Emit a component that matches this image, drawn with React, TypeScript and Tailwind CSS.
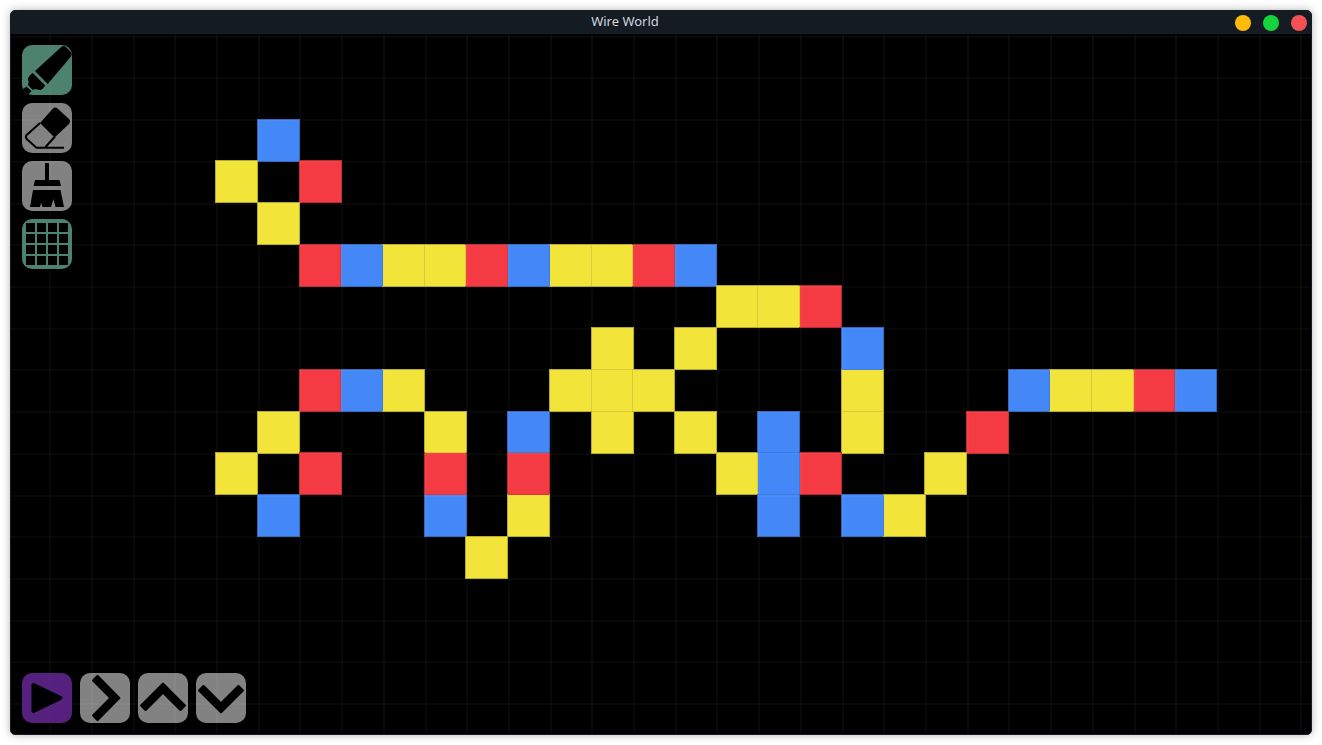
import React from "react";

type Kind = "Y" | "R" | "B";

const PITCH = 41.71;
const COLUMNS = 32;
const ROWS = 17;

const FILL: Record<Kind, string> = {
  Y: "fill-[#f2e439]",
  R: "fill-[#f43a42]",
  B: "fill-[#4488f8]",
};

const EDGE: Record<Kind, string> = {
  Y: "fill-[#b5ab2b]",
  R: "fill-[#b72c32]",
  B: "fill-[#3366ba]",
};

/* Each entry is a run of cells: column, row, kinds from left to right. */
const RUNS: [number, number, string][] = [
  [6, 2, "B"],
  [5, 3, "Y"],
  [7, 3, "R"],
  [6, 4, "Y"],
  [7, 5, "RBYYRBYYRB"],
  [17, 6, "YYR"],
  [14, 7, "Y"],
  [16, 7, "Y"],
  [20, 7, "B"],
  [7, 8, "RBY"],
  [13, 8, "YYY"],
  [20, 8, "Y"],
  [24, 8, "BYYRB"],
  [6, 9, "Y"],
  [10, 9, "Y"],
  [12, 9, "B"],
  [14, 9, "Y"],
  [16, 9, "Y"],
  [18, 9, "B"],
  [20, 9, "Y"],
  [23, 9, "R"],
  [5, 10, "Y"],
  [7, 10, "R"],
  [10, 10, "R"],
  [12, 10, "R"],
  [17, 10, "YBR"],
  [22, 10, "Y"],
  [6, 11, "B"],
  [10, 11, "B"],
  [12, 11, "Y"],
  [18, 11, "B"],
  [20, 11, "BY"],
  [11, 12, "Y"],
];

const cells = RUNS.flatMap(([column, row, kinds]) =>
  [...kinds].map((kind, i) => ({ column: column + i, row, kind: kind as Kind })),
);

const occupied = new Set(cells.map(({ column, row }) => `${column},${row}`));

const left = (column: number) => Math.round(column * PITCH - 4.4);
const top = (row: number) => Math.round(row * PITCH + 1.2);
const lineX = (column: number) => Math.round(column * PITCH - 3.6);
const lineY = (row: number) => Math.round(row * PITCH + 1.7);

function Board() {
  return (
    <svg className="absolute inset-0 h-full w-full" role="img" aria-label="Wire World board" shapeRendering="crispEdges">
      {cells.map(({ column, row, kind }) => (
        <rect key={`e${column}-${row}`} x={left(column)} y={top(row)} width="43" height="43" className={EDGE[kind]} />
      ))}
      {cells.map(({ column, row, kind }) => {
        const x = left(column);
        const y = top(row);
        const joinsRight = occupied.has(`${column + 1},${row}`);
        const joinsDown = occupied.has(`${column},${row + 1}`);
        const width = joinsRight ? left(column + 1) - x : 41;
        const height = joinsDown ? top(row + 1) - y : 41;
        return (
          <g key={`f${column}-${row}`}>
            <rect x={x + 1} y={y + 1} width={width} height={height} className={FILL[kind]} />
            {joinsRight && <rect x={x + width} y={y + 1} width="1" height={height} className="fill-black/10" />}
            {joinsDown && <rect x={x + 1} y={y + height} width={width} height="1" className="fill-black/10" />}
          </g>
        );
      })}
      {Array.from({ length: COLUMNS }, (_, i) => (
        <rect key={`c${i}`} x={lineX(i)} y="0" width="2" height="100%" className="fill-white/3" />
      ))}
      {Array.from({ length: ROWS }, (_, i) => (
        <rect key={`r${i}`} x="0" y={lineY(i)} width="100%" height="2" className="fill-white/3" />
      ))}
    </svg>
  );
}

function Tool({ label, tone, children }: { label: string; tone: string; children: React.ReactNode }) {
  return (
    <button type="button" aria-label={label} className={`size-[50px] overflow-hidden rounded-[10px] ${tone}`}>
      <svg viewBox="0 0 50 50" className="size-full" aria-hidden="true">
        {children}
      </svg>
    </button>
  );
}

function Chevron({ points }: { points: string }) {
  return <polygon points={points} stroke="black" strokeWidth="2.4" strokeLinejoin="round" />;
}

export default function App() {
  return (
    <div className="h-screen bg-white p-[10px]">
      <main className="flex h-full flex-col overflow-hidden rounded-[5px] border border-[#141b23] bg-black shadow-[0_0_8px_rgba(0,0,0,0.3)]">
        <header className="relative flex h-[23px] shrink-0 items-center justify-end gap-3 bg-[#141b23] pr-1">
          <h1 className="absolute inset-x-0 top-0 pr-[72px] text-center font-['Noto_Sans',sans-serif] text-[13px] leading-5 text-[#cfd6de]">
            Wire World
          </h1>
          <button type="button" aria-label="Minimize" className="relative size-4 rounded-full bg-[#fdbc0c]" />
          <button type="button" aria-label="Maximize" className="relative size-4 rounded-full bg-[#14d43c]" />
          <button type="button" aria-label="Close" className="relative size-4 rounded-full bg-[#f54f57]" />
        </header>
        <section className="relative flex flex-1 flex-col justify-between p-[11px]">
          <Board />
          <nav aria-label="Drawing tools" className="relative flex w-fit flex-col gap-2">
            <Tool label="Brush" tone="bg-[#60a38b]/80">
              <path d="M39 2.2Q41.5 0 44 2L48.5 6.5Q50.5 9 49 11.5L25.7 39L13 26Z" />
              <path d="M43.5 1Q47.5 3.5 50 7.5" fill="none" stroke="#4d826f" strokeWidth="1" />
              <path d="M10.8 28L23.2 40.6L20.5 44Q18 46 14.5 44L10.5 44.8L6 40Q7.5 37 6 34Q6.5 31 10.8 28Z" />
              <path d="M4.5 41.5L9.5 46.2L6.5 49L2 48L0 44.5Z" />
            </Tool>
            <Tool label="Eraser" tone="bg-white/51">
              <path d="M18 20L31 5.5Q33 3.5 35.5 5.5L47 16Q49 18.5 47 21L32.5 34.5Z" />
              <path d="M18 20L4.7 32Q3 34 4.7 36L14.5 44.8H42M33 33.5L23.5 44" fill="none" stroke="black" strokeWidth="2" />
            </Tool>
            <Tool label="Clear" tone="bg-white/51">
              <path d="M23 2H27V19H37.5L39 25H11.5L13 19H23ZM11 29H38.5L42 46H33.5L31.5 38L29 46H20.5L19 42L18 46H8Z" />
            </Tool>
            <Tool label="Grid" tone="bg-[#60a38b]/80">
              {[4, 15, 26, 37].map((y) =>
                [4, 15, 26, 37].map((x) => <rect key={`${x}-${y}`} x={x} y={y} width="9" height="9" />),
              )}
            </Tool>
          </nav>
          <nav aria-label="Simulation" className="relative flex w-fit gap-2">
            <Tool label="Play" tone="bg-[#6c289e]/80">
              <path d="M11.5 12L38.5 25L11.5 38Z" stroke="black" strokeWidth="4" strokeLinejoin="round" />
            </Tool>
            <Tool label="Step" tone="bg-white/51">
              <Chevron points="39.2,25 17.5,3.2 13.2,7.5 30.6,25 13.2,42.5 17.5,46.8" />
            </Tool>
            <Tool label="Faster" tone="bg-white/51">
              <Chevron points="25,10.8 3.2,32.5 7.5,36.8 25,19.4 42.5,36.8 46.8,32.5" />
            </Tool>
            <Tool label="Slower" tone="bg-white/51">
              <Chevron points="25,39.2 3.2,17.5 7.5,13.2 25,30.6 42.5,13.2 46.8,17.5" />
            </Tool>
          </nav>
        </section>
      </main>
    </div>
  );
}
